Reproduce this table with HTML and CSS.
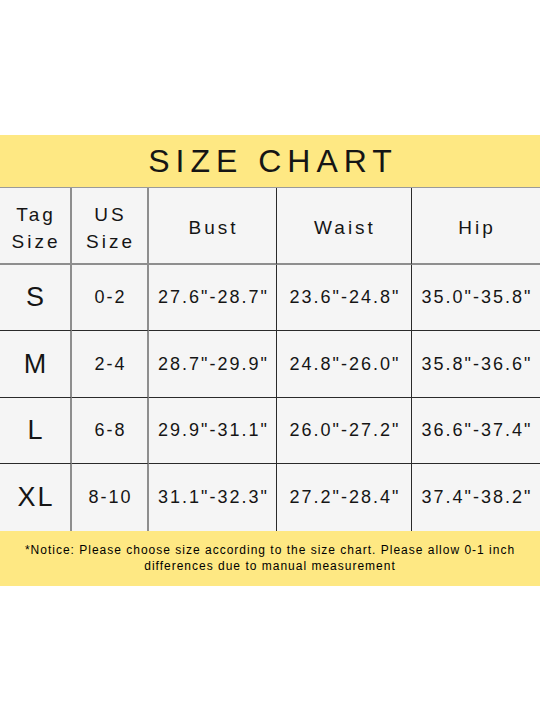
FILE: index.html
```html
<!DOCTYPE html>
<html>
<head>
<meta charset="utf-8">
<link rel="stylesheet" href="styles.css">
</head>
<body>
<div class="chart">
  <div class="title">SIZE CHART</div>
  <div class="grid">
    <div class="cell head c1">Tag<br>Size</div>
    <div class="cell head c2">US<br>Size</div>
    <div class="cell head c3">Bust</div>
    <div class="cell head c4">Waist</div>
    <div class="cell head c5">Hip</div>

    <div class="cell tag c1">S</div>
    <div class="cell c2">0-2</div>
    <div class="cell c3">27.6"-28.7"</div>
    <div class="cell c4">23.6"-24.8"</div>
    <div class="cell c5">35.0"-35.8"</div>

    <div class="cell tag c1">M</div>
    <div class="cell c2">2-4</div>
    <div class="cell c3">28.7"-29.9"</div>
    <div class="cell c4">24.8"-26.0"</div>
    <div class="cell c5">35.8"-36.6"</div>

    <div class="cell tag c1">L</div>
    <div class="cell c2">6-8</div>
    <div class="cell c3">29.9"-31.1"</div>
    <div class="cell c4">26.0"-27.2"</div>
    <div class="cell c5">36.6"-37.4"</div>

    <div class="cell tag c1 last">XL</div>
    <div class="cell c2 last">8-10</div>
    <div class="cell c3 last">31.1"-32.3"</div>
    <div class="cell c4 last">27.2"-28.4"</div>
    <div class="cell c5 last">37.4"-38.2"</div>
  </div>
  <div class="notice">*Notice: Please choose size according to the size chart. Please allow 0-1 inch<br>differences due to manual measurement</div>
</div>
</body>
</html>
```
FILE: styles.css
```css
html, body {
  margin: 0;
  padding: 0;
  background: #ffffff;
}
body {
  font-family: "Liberation Sans", Arial, Helvetica, sans-serif;
  color: #151515;
}
.chart {
  margin-top: 135px;
  width: 540px;
}
.title {
  height: 52px;
  background: #fee883;
  font-size: 32px;
  letter-spacing: 6px;
  text-align: center;
  line-height: 52px;
  padding-left: 6px;
  box-sizing: border-box;
}
.grid {
  display: grid;
  grid-template-columns: 72px 77px 128px 135px 128px;
  grid-template-rows: 77px 66px 67px 66px 67px;
  background: #f5f5f5;
  border-top: 1px solid #9a9a9a;
  box-sizing: border-box;
}
.cell {
  display: flex;
  align-items: center;
  justify-content: center;
  text-align: center;
  box-sizing: border-box;
  border-bottom: 1px solid #2a2a2a;
  font-size: 18px;
  letter-spacing: 2px;
  padding-left: 2px;
}
.cell.last {
  border-bottom: none;
}
.head {
  font-size: 19px;
  letter-spacing: 3px;
  line-height: 27px;
  border-bottom: 2px solid #8e8e8e;
  padding-left: 2px;
  padding-top: 4px;
}
.c1, .c2 {
  border-right: 2px solid #8e8e8e;
}
.c3, .c4 {
  border-right: 1px solid #2a2a2a;
}
.tag {
  font-size: 27px;
  letter-spacing: 2px;
}
.notice {
  height: 55px;
  background: #fee883;
  display: flex;
  align-items: center;
  justify-content: center;
  text-align: center;
  font-size: 12px;
  line-height: 16px;
  letter-spacing: 1px;
  color: #000000;
  padding-bottom: 1px;
  box-sizing: border-box;
}
```
